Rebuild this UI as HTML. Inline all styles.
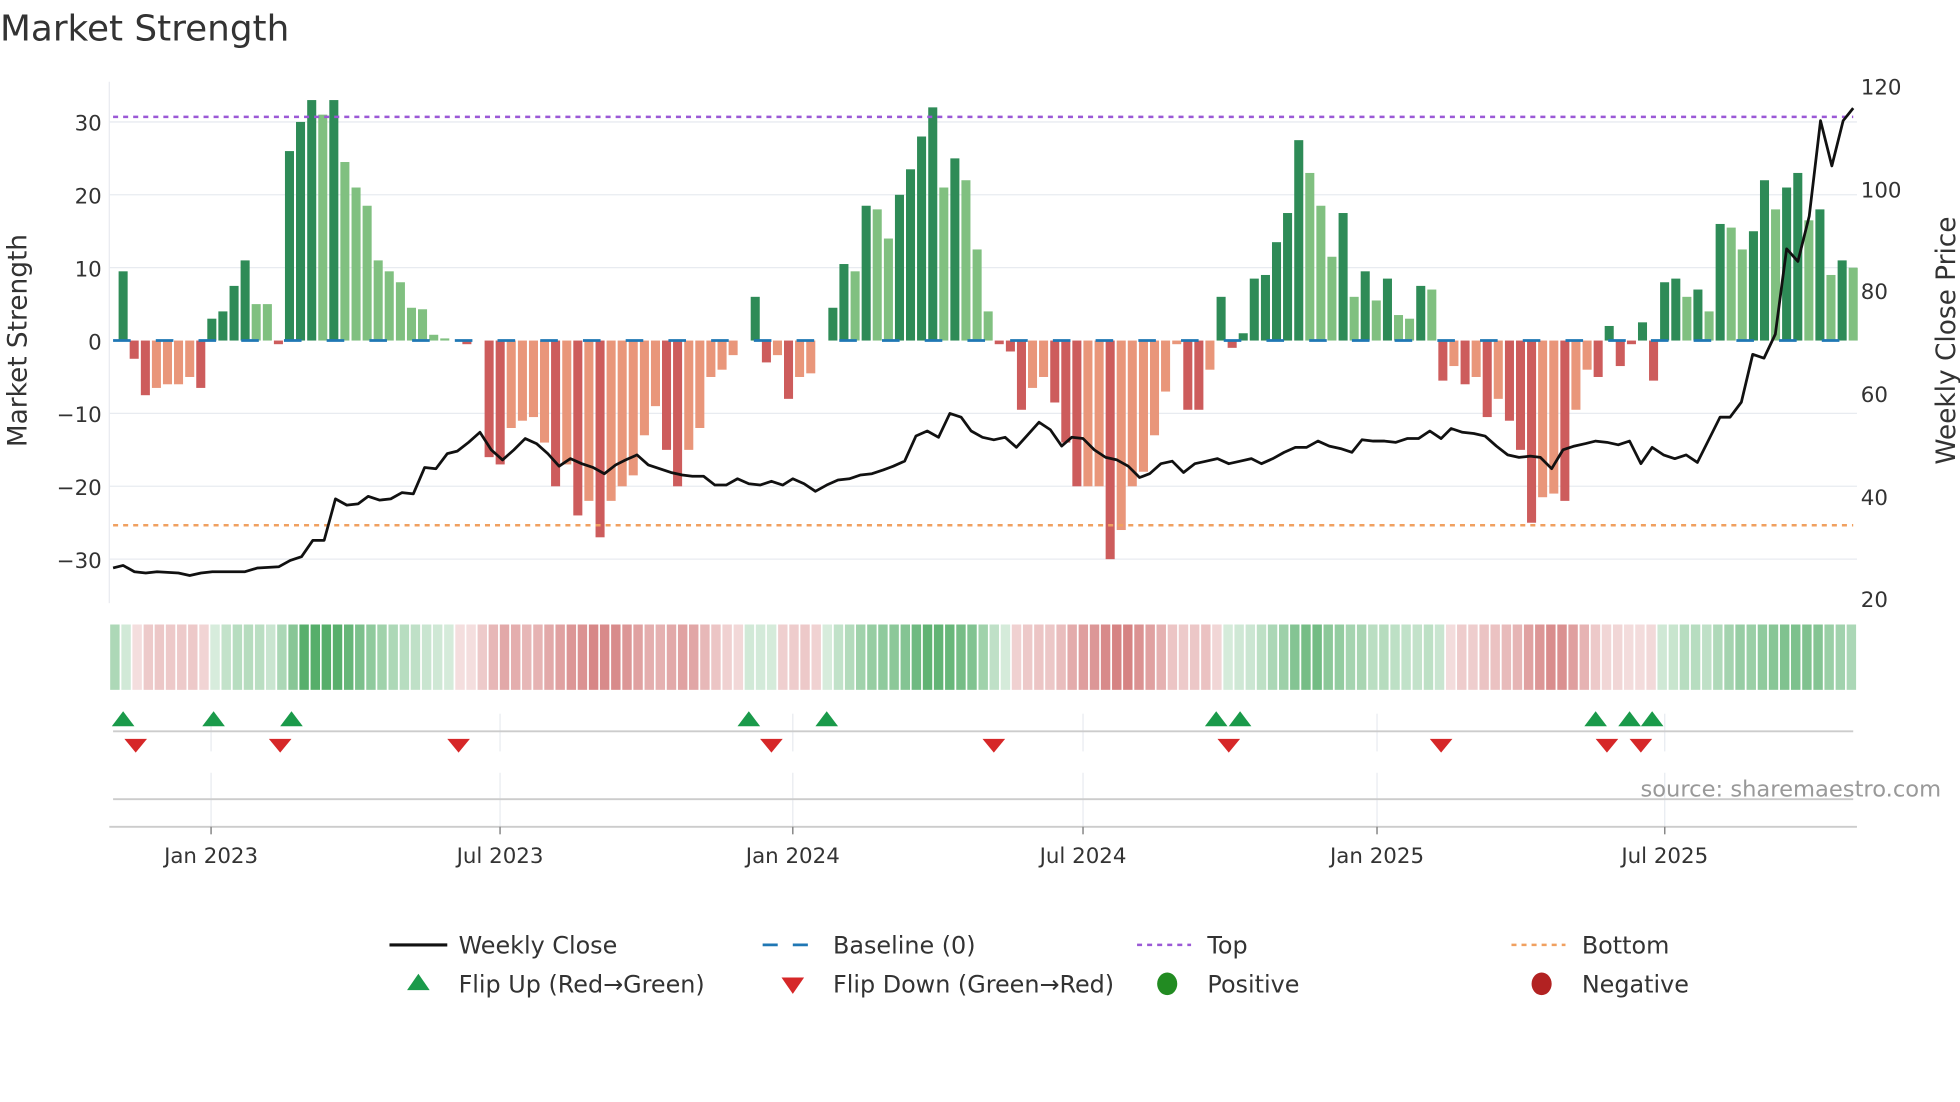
<!DOCTYPE html>
<html><head><meta charset="utf-8"><style>
html,body{margin:0;padding:0;background:#fff;width:1960px;height:1102px;overflow:hidden}
svg{display:block}
text{font-family:"DejaVu Sans","Liberation Sans",sans-serif;fill:#333}
</style></head><body>
<svg id="s" width="1960" height="1102" viewBox="0 0 1560 877" xmlns="http://www.w3.org/2000/svg">
<g id="grid" stroke="#e8ebf0" stroke-width="1">
<line x1="87" y1="97" x2="1478" y2="97"/><line x1="87" y1="155" x2="1478" y2="155"/><line x1="87" y1="213" x2="1478" y2="213"/>
<line x1="87" y1="329" x2="1478" y2="329"/><line x1="87" y1="387" x2="1478" y2="387"/><line x1="87" y1="445" x2="1478" y2="445"/>
<line x1="168" y1="568" x2="168" y2="598"/><line x1="398" y1="568" x2="398" y2="598"/><line x1="631" y1="568" x2="631" y2="598"/><line x1="862" y1="568" x2="862" y2="598"/><line x1="1096" y1="568" x2="1096" y2="598"/><line x1="1325" y1="568" x2="1325" y2="598"/>
<line x1="168" y1="615" x2="168" y2="658"/><line x1="398" y1="615" x2="398" y2="658"/><line x1="631" y1="615" x2="631" y2="658"/><line x1="862" y1="615" x2="862" y2="658"/><line x1="1096" y1="615" x2="1096" y2="658"/><line x1="1325" y1="615" x2="1325" y2="658"/>
</g>
<line x1="87" y1="65" x2="87" y2="480" stroke="#e8ebf0"/>
<line x1="90" y1="582" x2="1475" y2="582" stroke="#ccc" stroke-width="1.5"/>
<line x1="90" y1="636" x2="1475" y2="636" stroke="#ccc" stroke-width="1.5"/>
<line x1="87" y1="658" x2="1478" y2="658" stroke="#ccc" stroke-width="1.5"/>
<g stroke="#888" stroke-width="1.2"><line x1="168" y1="658" x2="168" y2="664"/><line x1="398" y1="658" x2="398" y2="664"/><line x1="631" y1="658" x2="631" y2="664"/><line x1="862" y1="658" x2="862" y2="664"/><line x1="1096" y1="658" x2="1096" y2="664"/><line x1="1325" y1="658" x2="1325" y2="664"/></g>
<g id="bars"></g>
<line x1="90" y1="271" x2="1475" y2="271" stroke="#1f77b4" stroke-width="2.2" stroke-dasharray="14 20"/>
<line x1="90" y1="93" x2="1475" y2="93" stroke="#9b59d6" stroke-width="2" stroke-dasharray="4 4"/>
<line x1="90" y1="418" x2="1475" y2="418" stroke="#f0a060" stroke-width="2" stroke-dasharray="4 4"/>
<polyline id="price" fill="none" stroke="#111" stroke-width="2.2" stroke-linejoin="round" points="90,452 98,450"/>
<g id="heat"></g>
<g id="marks"></g>
<text x="0" y="32" font-size="28.5">Market Strength</text>
<g font-size="17" text-anchor="end"><text x="81" y="104">30</text><text x="81" y="162">20</text><text x="81" y="220">10</text><text x="81" y="278">0</text><text x="81" y="336">−10</text><text x="81" y="394">−20</text><text x="81" y="452">−30</text></g>
<g font-size="17"><text x="1481" y="75">120</text><text x="1481" y="157">100</text><text x="1481" y="238">80</text><text x="1481" y="320">60</text><text x="1481" y="402">40</text><text x="1481" y="483">20</text></g>
<text transform="translate(21,271) rotate(-90)" font-size="21" text-anchor="middle">Market Strength</text>
<text transform="translate(1556,271) rotate(-90)" font-size="21" text-anchor="middle">Weekly Close Price</text>
<g font-size="17" text-anchor="middle"><text x="168" y="687">Jan 2023</text><text x="398" y="687">Jul 2023</text><text x="631" y="687">Jan 2024</text><text x="862" y="687">Jul 2024</text><text x="1096" y="687">Jan 2025</text><text x="1325" y="687">Jul 2025</text></g>
<text x="1545" y="634" font-size="18" text-anchor="end" style="fill:#999">source: sharemaestro.com</text>
<g font-size="19">
<line x1="310" y1="752" x2="356" y2="752" stroke="#111" stroke-width="2.5"/><text x="365" y="759">Weekly Close</text>
<line x1="607" y1="752" x2="650" y2="752" stroke="#1f77b4" stroke-width="2.2" stroke-dasharray="12 12"/><text x="663" y="759">Baseline (0)</text>
<line x1="905" y1="752" x2="948" y2="752" stroke="#9b59d6" stroke-width="2" stroke-dasharray="4 4"/><text x="961" y="759">Top</text>
<line x1="1203" y1="752" x2="1246" y2="752" stroke="#f0a060" stroke-width="2" stroke-dasharray="4 4"/><text x="1259" y="759">Bottom</text>
<polygon points="324,788 342,788 333,775" fill="#1a9a4a"/><text x="365" y="790">Flip Up (Red→Green)</text>
<polygon points="622,778 640,778 631,791" fill="#d62728"/><text x="663" y="790">Flip Down (Green→Red)</text>
<ellipse cx="929" cy="783" rx="8" ry="9" fill="#228b22"/><text x="961" y="790">Positive</text>
<ellipse cx="1227" cy="783" rx="8" ry="9" fill="#b22222"/><text x="1259" y="790">Negative</text>
</g>
</svg>
<script>
(function(){
var NS="http://www.w3.org/2000/svg";
function el(parent,tag,attrs){var e=document.createElementNS(NS,tag);for(var k in attrs){e.setAttribute(k,attrs[k]);}parent.appendChild(e);return e;}
var B=[[9.5,'g'],[-2.5,'r'],[-7.5,'r'],[-6.5,'s'],[-6,'s'],[-6,'s'],[-5,'s'],[-6.5,'r'],[3,'g'],[4,'g'],[7.5,'g'],[11,'g'],[5,'l'],[5,'l'],[-0.5,'r'],[26,'g'],[30,'g'],[33,'g'],[31,'l'],[33,'g'],[24.5,'l'],[21,'l'],[18.5,'l'],[11,'l'],[9.5,'l'],[8,'l'],[4.5,'l'],[4.3,'l'],[0.8,'l'],[0.3,'l'],[0,'l'],[-0.5,'r'],[0,'l'],
[-16,'r'],[-17,'r'],[-12,'s'],[-11,'s'],[-10.5,'s'],[-14,'s'],[-20,'r'],[-17,'s'],[-24,'r'],[-22,'s'],[-27,'r'],[-22,'s'],[-20,'s'],[-18.5,'s'],[-13,'s'],[-9,'s'],[-15,'r'],[-20,'r'],[-15,'s'],[-12,'s'],[-5,'s'],[-4,'s'],[-2,'s'],[0,'s'],[6,'g'],[-3,'r'],[-2,'s'],[-8,'r'],[-5,'s'],[-4.5,'s'],[0,'s'],
[4.5,'g'],[10.5,'g'],[9.5,'l'],[18.5,'g'],[18,'l'],[14,'l'],[20,'g'],[23.5,'g'],[28,'g'],[32,'g'],[21,'l'],[25,'g'],[22,'l'],[12.5,'l'],[4,'l'],[-0.5,'r'],[-1.5,'r'],[-9.5,'r'],[-6.5,'s'],[-5,'s'],[-8.5,'r'],[-14,'r'],[-20,'r'],[-20,'s'],[-20,'s'],[-30,'r'],[-26,'s'],[-20,'s'],[-18,'s'],[-13,'s'],[-7,'s'],[-0.5,'s'],[-9.5,'r'],[-9.5,'r'],[-4,'s'],[6,'g'],[-1,'r'],[1,'g'],
[8.5,'g'],[9,'g'],[13.5,'g'],[17.5,'g'],[27.5,'g'],[23,'l'],[18.5,'l'],[11.5,'l'],[17.5,'g'],[6,'l'],[9.5,'g'],[5.5,'l'],[8.5,'g'],[3.5,'l'],[3,'l'],[7.5,'g'],[7,'l'],[-5.5,'r'],[-3.5,'s'],[-6,'r'],[-5,'s'],[-10.5,'r'],[-8,'s'],[-11,'r'],[-15,'r'],[-25,'r'],[-21.5,'s'],[-21,'s'],[-22,'r'],[-9.5,'s'],[-4,'s'],[-5,'r'],[2,'g'],[-3.5,'r'],[-0.5,'r'],[2.5,'g'],[-5.5,'r'],
[8,'g'],[8.5,'g'],[6,'l'],[7,'g'],[4,'l'],[16,'g'],[15.5,'l'],[12.5,'l'],[15,'g'],[22,'g'],[18,'l'],[21,'g'],[23,'g'],[16.5,'l'],[18,'g'],[9,'l'],[11,'g'],[10,'l']];
var C={g:'#2e8b57',l:'#80c080',r:'#cd5c5c',s:'#e9967a'};
var bars=document.getElementById('bars'),heat=document.getElementById('heat');
var n=B.length,x0=98,dx=(1475-98)/(n-1),hx=(1478-87)/n;
for(var i=0;i<n;i++){
 var v=B[i][0],x=x0+i*dx,y=271-v*5.8,top=Math.min(y,271),ht=Math.abs(v*5.8);
 if(v!==0){if(ht<1.5)ht=1.5;el(bars,'rect',{x:(x-3.6).toFixed(1),y:top.toFixed(1),width:'7.2',height:ht.toFixed(1),fill:C[B[i][1]]});}
 var p1=i>0?B[i-1][0]:v,p2=i>1?B[i-2][0]:v;
 var sm=(v+p1+p2)/3,a=0.2+Math.min(Math.abs(sm)/30,1)*0.65,col=sm>=0?'56,160,80':'200,90,90';
 el(heat,'rect',{x:(87+i*hx+0.7).toFixed(1),y:'497',width:(hx-1.4).toFixed(1),height:'52',fill:'rgb('+col+')','fill-opacity':a.toFixed(2)});
}
var P=[[90,452],[98,450],[107,455],[116,456],[125,455],[142,456],[151,458],[160,456],[169,455],[195,455],[205,452],[222,451],[231,446],[240,443],[249,430],[258,430],[267,397],[276,402],[285,401],[293,395],[302,398],[311,397],[320,392],[329,393],[338,372],[347,373],[356,361],[364,359],[373,352],[382,344],[391,358],[400,366],[409,358],[418,349],[427,353],[436,361],[445,371],[454,365],[463,369],[472,372],[481,377],[490,370],[498,366],[507,362],[516,370],[525,373],[534,376],[543,378],[551,379],[560,379],[569,386],[578,386],[587,381],[596,385],[605,386],[614,383],[623,386],[631,381],[640,385],[649,391],[658,386],[667,382],[676,381],[685,378],[694,377],[703,374],[711,371],[720,367],[729,347],[738,343],[747,348],[756,329],[765,332],[773,343],[782,348],[791,350],[800,348],[809,356],[818,346],[827,336],[836,342],[845,355],[853,348],[862,349],[871,358],[880,364],[889,366],[898,371],[907,380],[915,377],[924,369],[933,367],[942,376],[951,369],[960,367],[969,365],[978,369],[987,367],[996,365],[1004,369],[1013,365],[1022,360],[1031,356],[1040,356],[1049,351],[1058,355],[1067,357],[1076,360],[1084,350],[1093,351],[1102,351],[1111,352],[1120,349],[1129,349],[1138,343],[1147,349],[1155,341],[1164,344],[1173,345],[1182,347],[1191,355],[1200,362],[1209,364],[1218,363],[1226,364],[1235,373],[1244,358],[1253,355],[1262,353],[1270,351],[1279,352],[1288,354],[1297,351],[1306,369],[1315,356],[1324,362],[1333,365],[1342,362],[1351,368],[1360,350],[1369,332],[1377,332],[1386,320],[1395,282],[1404,285],[1413,266],[1422,198],[1431,208],[1440,172],[1449,96],[1458,132],[1467,96],[1475,86]];
var pts=[];for(var j=0;j<P.length;j++){pts.push(P[j][0]+','+P[j][1]);}
document.getElementById('price').setAttribute('points',pts.join(' '));
var U=[98,170,232,596,658,968,987,1270,1297,1315],D=[108,223,365,614,791,978,1147,1279,1306],marks=document.getElementById('marks');
for(var k=0;k<U.length;k++){var x=U[k];el(marks,'polygon',{points:(x-9)+',578 '+(x+9)+',578 '+x+',566',fill:'#1a9a4a'});}
for(var k=0;k<D.length;k++){var x=D[k];el(marks,'polygon',{points:(x-9)+',588 '+(x+9)+',588 '+x+',599',fill:'#d62728'});}
})();
</script>
</body></html>
